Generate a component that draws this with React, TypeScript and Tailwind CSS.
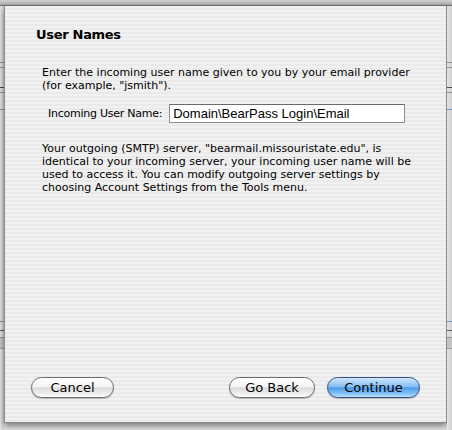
function SideStrip() {
  return (
    <div className="flex flex-col w-full bg-gradient-to-r from-[#e6e6e6] to-[#cfcfcf]">
      <div className="h-[56px]" />
      <div className="h-px bg-[#8f8f8f]" />
      <div className="h-[4px]" />
      <div className="h-px bg-[#8f8f8f]" />
      <div className="h-[19px]" />
      <div className="h-px bg-[#4a4a4a]" />
      <div className="h-[4px]" />
      <div className="h-px bg-[#8f8f8f]" />
      <div className="h-[16px]" />
      <div className="h-px bg-[#6f96c8]" />
      <div className="h-[211px]" />
      <div className="h-px bg-[#6f96c8]" />
      <div className="h-[8px]" />
      <div className="h-px bg-[#5a5a5a]" />
      <div className="h-[6px]" />
      <div className="h-[12px] bg-[#c4c4c4] border-y border-[#9a9a9a]" />
    </div>
  );
}

function AquaButton({ label, primary, width }: { label: string; primary?: boolean; width: string }) {
  return (
    <button
      className={
        'h-[21px] rounded-full border text-[13px] leading-none shadow-[0_1px_1px_rgba(0,0,0,0.25)] ' +
        width +
        (primary
          ? ' border-[#3d4f8a] bg-[linear-gradient(to_bottom,#cfe6fc_0%,#86c0f2_45%,#4f9ae8_52%,#7fc0f6_80%,#b8e2ff_100%)]'
          : ' border-[#6c6c6c] bg-[linear-gradient(to_bottom,#ffffff_0%,#f4f4f4_45%,#dcdcdc_52%,#ececec_80%,#ffffff_100%)]')
      }
    >
      {label}
    </button>
  );
}

export default function App() {
  return (
    <div className="w-[452px] h-[430px] overflow-hidden bg-[#e2e2e2] flex flex-col font-['DejaVu_Sans',sans-serif] text-black">
      {/* toolbar edge */}
      <div className="h-[6px] shrink-0 bg-gradient-to-b from-[#d2d2d2] to-[#a8a8a8] border-b border-[#6f6f6f]" />

      <div className="flex flex-1 items-start">
        <div className="w-[4px] self-stretch flex">
          <SideStrip />
        </div>

        {/* sheet */}
        <div className="w-[443px] h-[417px] flex flex-col border-l border-r border-b border-[#8a8a8a] shadow-[0_3px_6px_rgba(0,0,0,0.45)] bg-[repeating-linear-gradient(to_bottom,#f1f1f1_0px,#f1f1f1_2px,#eaeaea_2px,#eaeaea_4px)]">
          <h1 className="ml-[31px] mt-[21px] text-[13px] leading-[16px] font-bold tracking-[-0.3px]">User Names</h1>

          <p className="ml-[37px] mt-[23px] text-[11px] leading-[13px] whitespace-nowrap">
            Enter the incoming user name given to you by your email provider
            <br />
            (for example, "jsmith").
          </p>

          <div className="flex items-center mt-[12px] ml-[43px]">
            <span className="text-[11px] leading-[13px] tracking-[-0.25px]">Incoming User Name:</span>
            <div className="ml-[7px] w-[236px] h-[19px] bg-white border border-[#8e8e8e] border-t-[#6a6a6a] flex items-center pl-[3px] font-['Liberation_Sans',sans-serif] text-[13px] leading-none">
              Domain\BearPass Login\Email
            </div>
          </div>

          <p className="ml-[37px] mt-[19px] text-[11px] leading-[13px] whitespace-nowrap">
            Your outgoing (SMTP) server, "bearmail.missouristate.edu", is
            <br />
            identical to your incoming server, your incoming user name will be
            <br />
            used to access it. You can modify outgoing server settings by
            <br />
            choosing Account Settings from the Tools menu.
          </p>

          <div className="mt-auto mb-[24px] flex items-center px-[26px]">
            <AquaButton label="Cancel" width="w-[83px]" />
            <div className="flex-1" />
            <AquaButton label="Go Back" width="w-[86px]" />
            <div className="w-[12px]" />
            <AquaButton label="Continue" primary width="w-[93px]" />
          </div>
        </div>

        <div className="flex-1 self-stretch flex">
          <SideStrip />
        </div>
      </div>
    </div>
  );
}
